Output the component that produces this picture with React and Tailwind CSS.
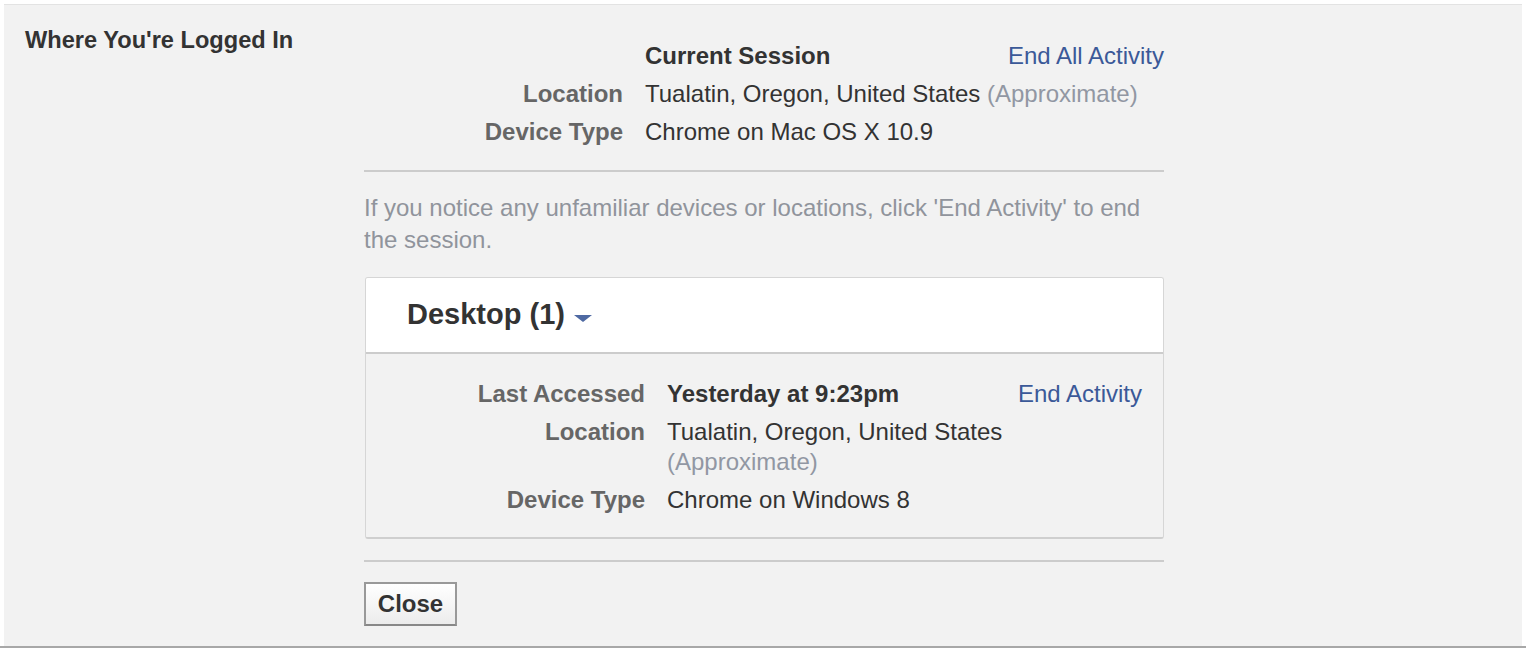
const font = { fontFamily: '"Liberation Sans", Arial, Helvetica, sans-serif' }

const Row = ({ label, children, link, bold }) => (
  <div className="flex items-start py-[4px] leading-[30px]">
    <div className="w-[259px] shrink-0 text-right font-bold text-[#666]">{label}</div>
    <div className={`ml-[22px] flex-1 ${bold ? 'font-bold text-[#333]' : 'text-[#333]'}`}>{children}</div>
    {link && <a className="text-[#3b5998] shrink-0">{link}</a>}
  </div>
)

const Caret = () => (
  <svg width="18" height="8" viewBox="0 0 18 8" className="ml-[9px] mt-[7px]">
    <path d="M0 0 H18 L9 7 Z" fill="#4e69a2" />
  </svg>
)

export default function App() {
  return (
    <div className="min-h-[648px] bg-white pt-[4px] px-[4px] text-[24px]" style={font}>
      <div className="flex h-[642px] bg-[#f2f2f2] border-t border-[#e3e3e3]">
        {/* Left heading */}
        <div className="w-[360px] shrink-0 pl-[21px] pt-[20px]">
          <h2 className="text-[23.6px] leading-[30px] font-bold text-[#333]">Where You're Logged In</h2>
        </div>

        {/* Right content */}
        <div className="w-[800px] pt-[32px]">
          <Row label="" link="End All Activity" bold>Current Session</Row>
          <Row label="Location">
            Tualatin, Oregon, United States <span className="text-[#9197a3]">(Approximate)</span>
          </Row>
          <Row label="Device Type">Chrome on Mac OS X 10.9</Row>

          <div className="mt-[19px] h-[2px] bg-[#cccccc]" />

          <p className="mt-[20px] leading-[32px] text-[#90949c]">
            If you notice any unfamiliar devices or locations, click 'End Activity' to end the session.
          </p>

          {/* Desktop card */}
          <div className="mt-[21px] ml-[1px] rounded-[3px] border border-[#d6d6d6] border-b-2 border-b-[#cfcfcf] overflow-hidden">
            <div className="h-[76px] bg-white flex items-center pl-[41px] border-b-2 border-[#cccccc]">
              <span className="text-[29px] font-bold text-[#333]">Desktop (1)</span>
              <Caret />
            </div>
            <div className="bg-[#f2f2f2] pt-[21px] pb-[18px] pl-[22px] pr-[21px]">
              <div className="flex items-start py-[4px] leading-[30px]">
                <div className="w-[257px] shrink-0 text-right font-bold text-[#666]">Last Accessed</div>
                <div className="ml-[22px] w-[350px] font-bold text-[#333]">Yesterday at 9:23pm</div>
                <a className="ml-auto text-[#3b5998]">End Activity</a>
              </div>
              <div className="flex items-start py-[4px] leading-[30px]">
                <div className="w-[257px] shrink-0 text-right font-bold text-[#666]">Location</div>
                <div className="ml-[22px] w-[350px] text-[#333]">
                  Tualatin, Oregon, United States <span className="text-[#9197a3]">(Approximate)</span>
                </div>
              </div>
              <div className="flex items-start py-[4px] leading-[30px]">
                <div className="w-[257px] shrink-0 text-right font-bold text-[#666]">Device Type</div>
                <div className="ml-[22px] w-[350px] text-[#333]">Chrome on Windows 8</div>
              </div>
            </div>
          </div>

          <div className="mt-[21px] h-[2px] bg-[#cccccc]" />

          <button className="mt-[20px] h-[44px] w-[93px] border-2 border-[#999] border-b-[#888] bg-gradient-to-b from-white to-[#ececec] font-bold text-[24px] text-[#333] leading-none">
            Close
          </button>
        </div>
      </div>
      <div className="-mx-[4px] h-[2px] bg-[#a8a8a8]" />
    </div>
  )
}
